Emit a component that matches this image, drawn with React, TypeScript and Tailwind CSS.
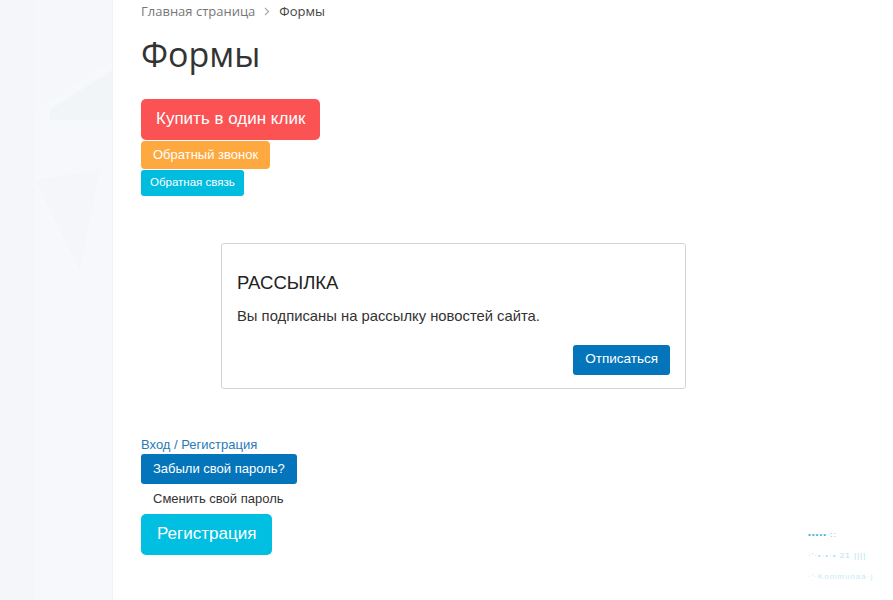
import React from 'react';

const arial = { fontFamily: '"Liberation Sans", Arial, sans-serif' };

export default function App() {
    return (
        <div className="relative flex w-[893px] h-[600px] overflow-hidden bg-white" style={arial}>
            {/* Left decorative strip */}
            <div className="relative w-[113px] shrink-0 bg-[#f6f8fb] border-r border-[#f0f2f6]">
                <svg className="absolute inset-0" width="112" height="600" viewBox="0 0 112 600">
                    <polygon points="0,0 35,0 35,600 0,600" fill="#f4f6f9" />
                    <polygon points="35,0 112,0 112,60 35,110" fill="#f5f7fa" />
                    <polygon points="50,110 112,70 112,120 50,120" fill="#f2f5f8" />
                    <polygon points="35,180 100,170 80,270" fill="#f4f6f9" />
                </svg>
            </div>

            <div className="flex-1 pl-[28px] pt-[2px]">
                {/* Breadcrumb */}
                <div className="flex items-center gap-[8px] text-[13px] text-[#777]" style={{ fontFamily: '"Open Sans", sans-serif' }}>
                    <span>Главная страница</span>
                    <svg width="6" height="9" viewBox="0 0 6 9" className="mx-[1px]">
                        <path d="M1 1l3.5 3.5L1 8" stroke="#aaa" strokeWidth="1.2" fill="none" />
                    </svg>
                    <span className="text-[#444]">Формы</span>
                </div>

                <h1 className="mt-[11px] text-[34px] leading-[42px] text-[#333]" style={{ fontFamily: '"Open Sans", sans-serif' }}>Формы</h1>

                <div className="mt-[24px] flex flex-col items-start gap-[1px]">
                    <button className="h-[41px] px-[15px] rounded-[5px] bg-[#fb5253] text-white text-[17px]">Купить в один клик</button>
                    <button className="h-[28px] px-[12px] rounded-[4px] bg-[#fea93f] text-white text-[13px]">Обратный звонок</button>
                    <button className="h-[26px] px-[9px] rounded-[3px] bg-[#00bde0] text-white text-[11.5px]">Обратная связь</button>
                </div>

                {/* Subscription card */}
                <div className="ml-[80px] mt-[47px] w-[465px] h-[146px] border border-[#d4d4d4] rounded-[3px] px-[15px] pt-[27px]">
                    <div className="text-[18.5px] leading-[24px] text-[#222]">РАССЫЛКА</div>
                    <div className="mt-[11px] text-[14.8px] leading-[20px] text-[#333]">Вы подписаны на рассылку новостей сайта.</div>
                    <div className="mt-[19px] flex justify-end">
                        <button className="h-[30px] px-[12px] rounded-[3px] bg-[#0575bb] text-white text-[13.5px]">Отписаться</button>
                    </div>
                </div>

                {/* Auth */}
                <div className="mt-[47px] flex flex-col items-start">
                    <a className="text-[13px] leading-[17px] text-[#2a7ab8]">Вход / Регистрация</a>
                    <button className="mt-[1px] h-[30px] px-[12px] rounded-[3px] bg-[#0575bb] text-white text-[13px]">Забыли свой пароль?</button>
                    <div className="mt-[5px] ml-[12px] text-[13px] leading-[20px] text-[#333]">Сменить свой пароль</div>
                    <button className="mt-[5px] h-[41px] px-[16px] rounded-[5px] bg-[#01bfe1] text-white text-[17px]">Регистрация</button>
                </div>
            </div>

            {/* faint dotted widget bottom right */}
            <div className="absolute left-[808px] top-[530px] flex flex-col gap-[11px] text-[8px] leading-[10px] tracking-[1px] text-[#8fd6ec] whitespace-nowrap">
                <span className="text-[#3cb8dd]">••••• ::</span>
                <span className="opacity-70">·'·•·•·• 21 ||||</span>
                <span className="opacity-50">·'·Kommunaa·|</span>
            </div>
        </div>
    );
}
